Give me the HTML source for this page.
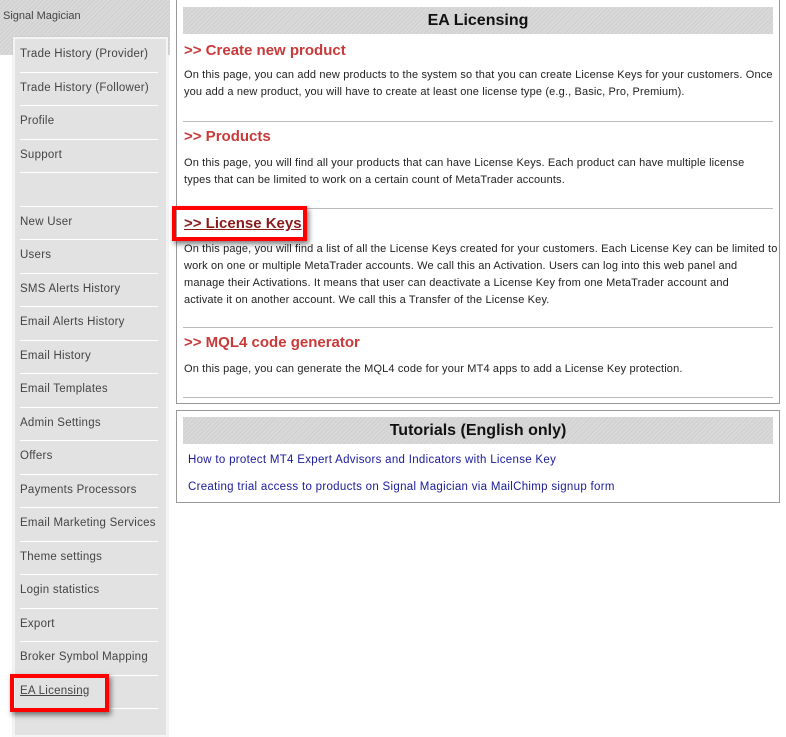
<!DOCTYPE html>
<html><head><style>
*{margin:0;padding:0;box-sizing:border-box}
body{width:786px;height:728px;overflow:hidden;background:#fff;font-family:"Liberation Sans",sans-serif;position:relative}
.hatch{background:repeating-linear-gradient(135deg,#cfcfcf 0 1px,#d9d9d9 1px 3px)}
#top{position:absolute;left:0;top:0;width:170px;height:55px}
#top span{position:absolute;left:3px;top:10px;font-size:11px;color:#444}
#menu{position:absolute;left:13px;top:37px;width:155px;height:700px;background:#e2e2e2;border:2px solid #f4f4f4;box-shadow:0 0 1px #bbb}
#menu div{position:absolute;left:5px;width:138px;font-size:11.5px;letter-spacing:0.25px;color:#444;height:33.5px;line-height:30px;border-bottom:1px solid #fff;white-space:nowrap}
.box{position:absolute;left:176px;width:604px;border:1px solid #999;background:#fff}
.hd{position:absolute;left:6px;width:590px;height:27px;text-align:center;font-weight:bold;font-size:16px;line-height:27px;color:#111}
.h{position:absolute;left:7px;font-size:15px;font-weight:bold;color:#c83a3a}
.p{position:absolute;left:7px;width:600px;font-size:11px;letter-spacing:0.15px;line-height:17px;color:#222;white-space:nowrap}
.sep{position:absolute;left:6px;width:590px;border-top:1px solid #bbb}
.lk{position:absolute;left:11px;font-size:11.5px;letter-spacing:0.3px;color:#1a1a9a;white-space:nowrap}
.red{position:absolute;border:4px solid #f00;box-shadow:2px 3px 5px rgba(0,0,0,.5)}
</style></head><body>
<div id="top" class="hatch"><span>Signal Magician</span></div>
<div id="menu">
<div style="top:0">Trade History (Provider)</div>
<div style="top:33.5px">Trade History (Follower)</div>
<div style="top:67px">Profile</div>
<div style="top:100.5px">Support</div>
<div style="top:134px"></div>
<div style="top:167.5px">New User</div>
<div style="top:201px">Users</div>
<div style="top:234.5px">SMS Alerts History</div>
<div style="top:268px">Email Alerts History</div>
<div style="top:301.5px">Email History</div>
<div style="top:335px">Email Templates</div>
<div style="top:368.5px">Admin Settings</div>
<div style="top:402px">Offers</div>
<div style="top:435.5px">Payments Processors</div>
<div style="top:469px">Email Marketing Services</div>
<div style="top:502.5px">Theme settings</div>
<div style="top:536px">Login statistics</div>
<div style="top:569.5px">Export</div>
<div style="top:603px">Broker Symbol Mapping</div>
<div style="top:636.5px;text-decoration:underline">EA Licensing</div>
</div>
<div class="red" style="left:10px;top:674px;width:99px;height:38px"></div>

<div class="box" style="top:-1px;height:405px">
<div class="hd hatch" style="top:7px">EA Licensing</div>
<div class="h" style="top:42px">&gt;&gt; Create new product</div>
<div class="p" style="top:67px">On this page, you can add new products to the system so that you can create License Keys for your customers. Once<br>you add a new product, you will have to create at least one license type (e.g., Basic, Pro, Premium).</div>
<div class="sep" style="top:121px"></div>
<div class="h" style="top:128px">&gt;&gt; Products</div>
<div class="p" style="top:155px">On this page, you will find all your products that can have License Keys. Each product can have multiple license<br>types that can be limited to work on a certain count of MetaTrader accounts.</div>
<div class="sep" style="top:208px"></div>
<div class="h" style="top:215px;color:#8a1a1a;text-decoration:underline">&gt;&gt; License Keys</div>
<div class="p" style="top:241px">On this page, you will find a list of all the License Keys created for your customers. Each License Key can be limited to<br>work on one or multiple MetaTrader accounts. We call this an Activation. Users can log into this web panel and<br>manage their Activations. It means that user can deactivate a License Key from one MetaTrader account and<br>activate it on another account. We call this a Transfer of the License Key.</div>
<div class="sep" style="top:327px"></div>
<div class="h" style="top:334px">&gt;&gt; MQL4 code generator</div>
<div class="p" style="top:361px">On this page, you can generate the MQL4 code for your MT4 apps to add a License Key protection.</div>
<div class="sep" style="top:397px"></div>
</div>
<div class="red" style="left:172px;top:206px;width:135px;height:35px"></div>

<div class="box" style="top:410px;height:93px">
<div class="hd hatch" style="top:6px">Tutorials (English only)</div>
<div class="lk" style="top:43px">How to protect MT4 Expert Advisors and Indicators with License Key</div>
<div class="lk" style="top:70px">Creating trial access to products on Signal Magician via MailChimp signup form</div>
</div>
</body></html>
